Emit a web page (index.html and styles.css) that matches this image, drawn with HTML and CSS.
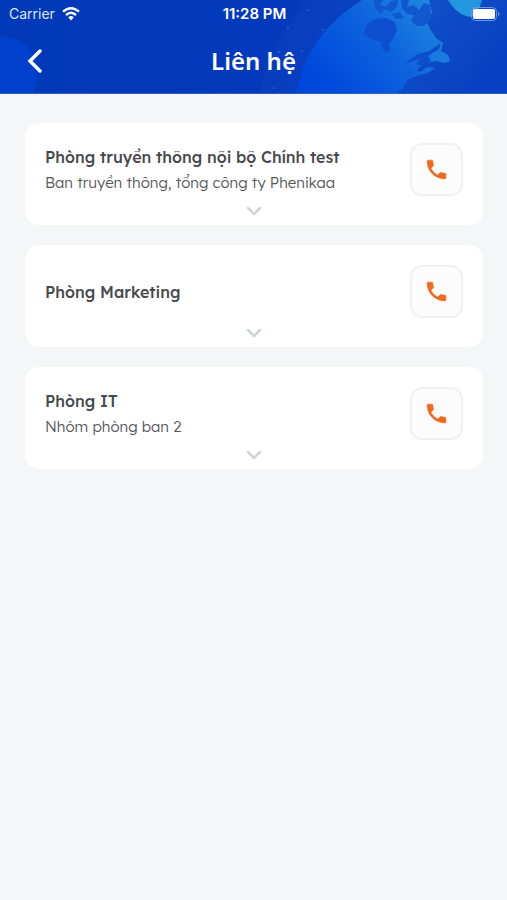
FILE: index.html
```html
<!DOCTYPE html>
<html lang="vi">
<head>
<meta charset="utf-8">
<meta name="viewport" content="width=device-width, initial-scale=1">
<title>Liên hệ</title>
<link rel="stylesheet" href="styles.css">
</head>
<body>
<header class="header">
  <svg class="header-art" viewBox="0 0 507 94" preserveAspectRatio="xMaxYMin slice" aria-hidden="true">
    <defs>
      <linearGradient id="sky" x1="0" y1="0" x2="1" y2="0">
        <stop offset="0" stop-color="#0039b8"/>
        <stop offset=".55" stop-color="#033abd"/>
        <stop offset="1" stop-color="#1250c8"/>
      </linearGradient>
      <linearGradient id="globe" gradientUnits="userSpaceOnUse" x1="330" y1="94" x2="440" y2="0">
        <stop offset="0" stop-color="#0048dc"/>
        <stop offset=".5" stop-color="#0d62dd"/>
        <stop offset="1" stop-color="#208ee0"/>
      </linearGradient>
      <linearGradient id="sea" gradientUnits="userSpaceOnUse" x1="380" y1="0" x2="480" y2="94">
        <stop offset="0" stop-color="#1454cc"/>
        <stop offset="1" stop-color="#0640c3"/>
      </linearGradient>
    </defs>
    <rect width="507" height="94" fill="url(#sky)"/>
    <circle cx="1" cy="73" r="37" fill="#0040cd"/>
    <path d="M258 94Q274 34 310 0H360Q308 42 297 94Z" fill="#0a42c2" opacity=".5"/>
    <path d="M296 94Q306 35 362 0H507V94Z" fill="url(#globe)"/>
    <path d="M395 94L403 88 407 80 419 75 428 73 435 68 427 67 422 71 417 72 419 67 428 63 436 61 444 63 450 61 448 55 441 51 443 43 436 38 430 29 426 21 432 13 429 0H507V94Z" fill="url(#sea)"/>
    <path d="M404 64L418 54 429 51 441 43 439 49 428 56 431 61 423 66 416 64 419 59Z" fill="#0b4fcb"/>
    <path d="M363 34L367 24 375 19 385 18 395 22 397 30 393 39 389 43 390 50 386 53 382 48 381 42 373 40Z" fill="#0d4fcf"/>
    <path d="M374 0H383L380 5 386 7 391 1 398 0 397 7 391 12 385 9 381 14 375 9Z M401 0H409L407 7 414 5 419 10 424 3 430 5 431 18 424 26 417 26 411 21 414 15 407 14 402 8Z M392 14L400 12 404 18 396 19Z" fill="#1157d0"/>
    <path d="M433 53L440 51 448 55 450 61 445 63 438 60 430 61Z" fill="#1a7bdc"/>
    <path d="M448 0Q458 16 471 17 478 15 482 0Z" fill="#2397df"/>
    <g fill="#245fd3">
      <circle cx="308" cy="10" r="1"/><circle cx="323" cy="30" r="1"/><circle cx="288" cy="27" r="1"/><circle cx="279" cy="52" r="1"/><circle cx="302" cy="51" r="1"/><circle cx="274" cy="88" r="1"/>
    </g>
    <rect y="93" width="507" height="1" fill="#285fce"/>
  </svg>
  <div class="status">
    <div class="carrier">
      <span>Carrier</span>
      <svg width="18" height="14" viewBox="0 0 18 14" aria-hidden="true">
        <g fill="none" stroke="#fff" stroke-width="2.4">
          <path d="M1 4.700Q9-2.200 17 4.700"/>
          <path d="M4 8Q9 3.600 14 8"/>
        </g>
        <path d="M6.200 10.200Q9 8 11.800 10.200L9 13.400Z" fill="#fff"/>
      </svg>
    </div>
    <time class="clock">11:28 PM</time>
    <svg class="battery" width="29" height="14" viewBox="0 0 29 14" aria-label="Pin" role="img">
      <rect x=".5" y=".5" width="25" height="13" rx="4" fill="none" stroke="#6f93e4"/>
      <rect x="2" y="2" width="22" height="10" rx="2" fill="#fff"/>
      <path d="M27 4.500Q30 7 27 9.500Z" fill="#6f93e4"/>
    </svg>
  </div>
  <div class="nav">
    <button class="back" type="button" aria-label="Quay lại">
      <svg width="16" height="24" viewBox="0 0 16 24" aria-hidden="true"><path d="M14 2L4 12 14 22" fill="none" stroke="#fff" stroke-width="3.500" stroke-linecap="round" stroke-linejoin="miter"/></svg>
    </button>
    <h1 class="title">Liên hệ</h1>
  </div>
</header>
<svg hidden>
  <symbol id="phone" viewBox="0 0 24 24"><path d="M6.620 10.790c1.440 2.830 3.760 5.140 6.590 6.590l2.200-2.200c.27-.27.67-.36 1.020-.24 1.120.37 2.330.57 3.570.57.55 0 1 .45 1 1V20c0 .55-.45 1-1 1-9.390 0-17-7.610-17-17 0-.55.45-1 1-1h3.500c.55 0 1 .45 1 1 0 1.250.2 2.450.57 3.570.11.35.03.74-.25 1.020z" fill="currentColor" stroke="currentColor" stroke-width=".6"/></symbol>
  <symbol id="chevron" viewBox="0 0 16 10"><path d="M2 2L8 8 14 2" fill="none" stroke="currentColor" stroke-width="2.500" stroke-linecap="round" stroke-linejoin="round"/></symbol>
</svg>
<main class="list">
  <article class="card">
    <div class="row">
      <div class="info">
        <h2 class="name">Phòng truyền thông nội bộ Chính test</h2>
        <p class="detail">Ban truyền thông, tổng công ty Phenikaa</p>
      </div>
      <button class="call" type="button" aria-label="Gọi"><svg width="25" height="25" aria-hidden="true"><use href="#phone"/></svg></button>
    </div>
    <button class="expand" type="button" aria-label="Mở rộng"><svg width="16" height="10" aria-hidden="true"><use href="#chevron"/></svg></button>
  </article>
  <article class="card">
    <div class="row">
      <div class="info">
        <h2 class="name">Phòng Marketing</h2>
      </div>
      <button class="call" type="button" aria-label="Gọi"><svg width="25" height="25" aria-hidden="true"><use href="#phone"/></svg></button>
    </div>
    <button class="expand" type="button" aria-label="Mở rộng"><svg width="16" height="10" aria-hidden="true"><use href="#chevron"/></svg></button>
  </article>
  <article class="card">
    <div class="row">
      <div class="info">
        <h2 class="name">Phòng IT</h2>
        <p class="detail">Nhóm phòng ban 2</p>
      </div>
      <button class="call" type="button" aria-label="Gọi"><svg width="25" height="25" aria-hidden="true"><use href="#phone"/></svg></button>
    </div>
    <button class="expand" type="button" aria-label="Mở rộng"><svg width="16" height="10" aria-hidden="true"><use href="#chevron"/></svg></button>
  </article>
</main>
</body>
</html>
```
FILE: styles.css
```css
* { box-sizing: border-box; }

body {
  margin: 0;
  min-height: 100vh;
  background: #f4f6f8;
  color: #48494c;
  font-family: Lexend, Inter, "Noto Sans", sans-serif;
}

h1, h2, p { margin: 0; }

button {
  padding: 0;
  border: 0;
  background: none;
  cursor: pointer;
}

svg { display: block; }
svg[hidden] { display: none; }

.header {
  position: relative;
  overflow: hidden;
  background: #0039b8;
  color: #fff;
}

.header-art {
  position: absolute;
  inset: 0;
  width: 100%;
  height: 100%;
}

.status,
.nav {
  position: relative;
  display: grid;
  grid-template-columns: 1fr auto 1fr;
  align-items: center;
}

.status {
  height: 27px;
  padding: 0 7px 0 9px;
  font-family: Inter, sans-serif;
  font-size: 14px;
}

.carrier {
  display: flex;
  align-items: center;
  gap: 7px;
  color: #dce7fb;
}

.clock {
  font-size: 15px;
  font-weight: 600;
}

.battery { justify-self: end; }

.nav {
  height: 67px;
  padding: 0 26px;
}

.nav .title { grid-column: 2; }

.back { justify-self: start; }

.title {
  font-family: "Noto Sans", sans-serif;
  font-size: 24px;
  font-weight: 600;
  line-height: 32px;
}

.list {
  display: flex;
  flex-direction: column;
  gap: 20px;
  padding: 29px 24px 29px 25px;
}

.card {
  padding: 20px 20px 0;
  border-radius: 14px;
  background: #fff;
}

.row {
  display: flex;
  align-items: center;
  justify-content: space-between;
  gap: 16px;
}

.name {
  font-size: 16px;
  font-weight: 500;
  line-height: 26px;
}

.detail {
  color: #55565a;
  font-size: 15px;
  font-weight: 300;
  line-height: 26px;
}

.call {
  display: grid;
  flex: none;
  place-items: center;
  width: 53px;
  height: 53px;
  border: 2px solid #f1f1f3;
  border-radius: 12px;
  background: #fcfcfc;
  color: #f0691f;
}

.expand {
  display: grid;
  place-items: center;
  width: 100%;
  height: 29px;
  color: #d0d4da;
}
```
